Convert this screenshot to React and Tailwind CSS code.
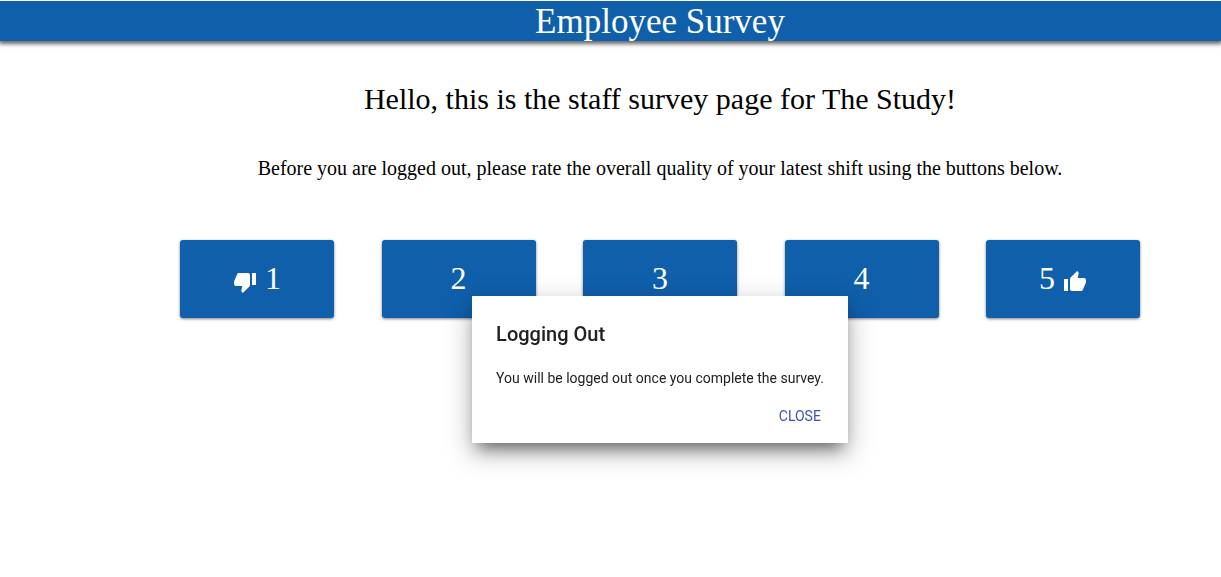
import React from "react";
import { MdThumbDown, MdThumbUp } from "react-icons/md";

const ratings = [1, 2, 3, 4, 5];

function RatingButton({ value }) {
  return (
    <button
      type="button"
      aria-label={`Rate ${value}`}
      className="flex h-[78px] w-[154px] items-center justify-center gap-2 rounded-[3px] bg-[#0f5fab] pb-0.5 text-[32px] leading-9 text-white shadow-[0_1px_3px_rgba(0,0,0,0.5)]"
    >
      {value === 1 && <MdThumbDown className="mt-2 size-6" />}
      <span>{value}</span>
      {value === 5 && <MdThumbUp className="mt-2 size-6" />}
    </button>
  );
}

export default function App() {
  return (
    <div className="min-h-screen bg-white font-['Liberation_Serif',serif] text-black">
      <header className="border-t border-white bg-[#0f5fab] pl-[99px] shadow-[0_2px_4px_1px_rgba(0,0,0,0.6)]">
        <h1 className="pt-0.5 text-center text-[35px] leading-[38px] text-white">Employee Survey</h1>
      </header>
      <main className="pl-[99px] text-center">
        <h2 className="pt-10 text-[30px] leading-9">Hello, this is the staff survey page for The Study!</h2>
        <p className="pt-[39px] text-[20px] leading-6">
          Before you are logged out, please rate the overall quality of your latest shift using the buttons below.
        </p>
        <div className="mx-auto mt-[60px] flex w-full max-w-[960px] justify-between gap-3">
          {ratings.map((value) => (
            <RatingButton key={value} value={value} />
          ))}
        </div>
      </main>
      <div className="fixed inset-x-0 top-[296px] flex justify-center pl-[99px]">
        <section
          role="dialog"
          aria-labelledby="dialog-title"
          className="bg-white px-6 pt-6 pb-[9px] font-[Roboto,sans-serif] text-[#212121] shadow-[0_11px_15px_-7px_rgba(0,0,0,0.5),0_9px_24px_2px_rgba(0,0,0,0.25)]"
        >
          <h3 id="dialog-title" className="text-xl font-medium">Logging Out</h3>
          <p className="mt-5 text-sm">You will be logged out once you complete the survey.</p>
          <div className="mt-2.5 flex justify-end">
            <button type="button" className="h-9 pr-[3px] text-sm text-[#3f51b5]">CLOSE</button>
          </div>
        </section>
      </div>
    </div>
  );
}
